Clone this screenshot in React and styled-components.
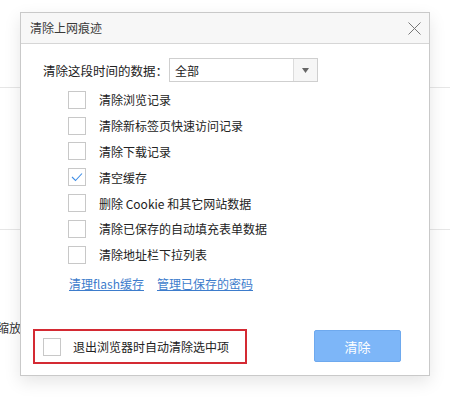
import React from "react";
import styled, { createGlobalStyle } from "styled-components";

const Global = createGlobalStyle`
  html, body { margin: 0; padding: 0; background: #fff; }
  body {
    font-family: "Microsoft YaHei", "Noto Sans CJK SC", "Noto Sans", sans-serif;
    color: #333;
    font-size: 12px;
  }
  #root { width: 450px; height: 404px; overflow: hidden; }
`;

const Page = styled.div`
  position: relative;
  width: 450px;
  height: 404px;
  overflow: hidden;
  background: #fff;
`;

const BgRule = styled.div`
  height: ${(p) => p.$h}px;
  border-bottom: 1px solid #e6e6e6;
`;

const BgText = styled.div`
  margin-top: 90px;
  margin-left: -3px;
  font-size: 12px;
  line-height: 16px;
  color: #333;
`;

const Dialog = styled.div`
  position: absolute;
  left: 20px;
  top: 12px;
  width: 408px;
  height: 362px;
  background: #fff;
  border: 1px solid #c9c9c9;
  box-shadow: 0 6px 16px rgba(0, 0, 0, 0.1);
  display: flex;
  flex-direction: column;
`;

const TitleBar = styled.div`
  height: 30px;
  background: #f7f7f7;
  border-bottom: 1px solid #d6d6d6;
  display: flex;
  align-items: center;
  justify-content: space-between;
  padding: 0 8px 0 9px;
`;

const Title = styled.span`
  font-size: 12px;
  color: #3a3a3a;
  line-height: 16px;
`;

const CloseBtn = styled.button`
  width: 14px;
  height: 14px;
  padding: 0;
  border: 0;
  background: none;
  display: flex;
  align-items: center;
  justify-content: center;
  cursor: pointer;
`;

const Body = styled.div`
  padding: 14px 0 0 22px;
  display: flex;
  flex-direction: column;
`;

const RangeRow = styled.div`
  display: flex;
  align-items: center;
  height: 24px;
`;

const RangeLabel = styled.span`
  font-size: 12.5px;
  color: #222;
  width: 126px;
`;

const Select = styled.div`
  width: 147px;
  height: 22px;
  border: 1px solid #cfcfcf;
  display: flex;
  align-items: center;
  background: #fff;
`;

const SelectValue = styled.span`
  flex: 1;
  padding-left: 5px;
  font-size: 12px;
  color: #222;
`;

const SelectArrow = styled.span`
  width: 23px;
  height: 22px;
  border-left: 1px solid #dcdcdc;
  background: #f6f6f6;
  display: flex;
  align-items: center;
  justify-content: center;
`;

const Options = styled.div`
  margin-top: 5px;
  padding-left: 25px;
  display: flex;
  flex-direction: column;
`;

const OptionRow = styled.label`
  display: flex;
  align-items: center;
  height: 25.8px;
  gap: 13px;
  font-size: 12px;
  color: #222;
`;

const Box = styled.span`
  width: 16px;
  height: 16px;
  border: 1px solid #c8c8c8;
  background: #fff;
  display: flex;
  align-items: center;
  justify-content: center;
  flex: none;
`;

const Links = styled.div`
  margin-top: 7px;
  padding-left: 26px;
  display: flex;
  gap: 13px;
  height: 18px;
  align-items: center;
`;

const Link = styled.a`
  color: #3d7ccc;
  text-decoration: underline;
  font-size: 12px;
  cursor: pointer;
`;

const Footer = styled.div`
  margin-top: auto;
  padding: 0 28px 11px 12px;
  display: flex;
  align-items: center;
  justify-content: space-between;
`;

const AutoClear = styled.label`
  width: 202px;
  height: 31px;
  border: 2px solid #d42a33;
  display: flex;
  align-items: center;
  gap: 12px;
  padding-left: 8px;
  box-sizing: content-box;
  font-size: 12px;
  color: #222;
`;

const ClearButton = styled.button`
  width: 87px;
  height: 32px;
  background: #7db6f8;
  border: 1px solid #6ea9ee;
  border-radius: 2px;
  color: #fff;
  font-family: inherit;
  font-size: 13px;
  margin-bottom: 1px;
`;

const Check = () => (
  <svg width="12" height="10" viewBox="0 0 12 10">
    <path d="M1 5 L4.5 8.5 L11 1.5" fill="none" stroke="#3f8ee6" strokeWidth="1.1" />
  </svg>
);

const options = [
  { label: "清除浏览记录", checked: false },
  { label: "清除新标签页快速访问记录", checked: false },
  { label: "清除下载记录", checked: false },
  { label: "清空缓存", checked: true },
  { label: "删除 Cookie 和其它网站数据", checked: false },
  { label: "清除已保存的自动填充表单数据", checked: false },
  { label: "清除地址栏下拉列表", checked: false },
];

export default function App() {
  return (
    <>
      <Global />
      <Page>
        <BgRule $h={87} />
        <BgRule $h={141} />
        <BgText>缩放</BgText>
        <Dialog>
          <TitleBar>
            <Title>清除上网痕迹</Title>
            <CloseBtn aria-label="关闭">
              <svg width="13" height="13" viewBox="0 0 13 13">
                <path d="M0.5 0.5 L12.5 12.5 M12.5 0.5 L0.5 12.5" stroke="#777" strokeWidth="1" />
              </svg>
            </CloseBtn>
          </TitleBar>
          <Body>
            <RangeRow>
              <RangeLabel>清除这段时间的数据：</RangeLabel>
              <Select>
                <SelectValue>全部</SelectValue>
                <SelectArrow>
                  <svg width="7" height="5" viewBox="0 0 7 5">
                    <path d="M0 0 L7 0 L3.5 5 Z" fill="#666" />
                  </svg>
                </SelectArrow>
              </Select>
            </RangeRow>
            <Options>
              {options.map((o) => (
                <OptionRow key={o.label}>
                  <Box>{o.checked && <Check />}</Box>
                  {o.label}
                </OptionRow>
              ))}
            </Options>
            <Links>
              <Link>清理flash缓存</Link>
              <Link>管理已保存的密码</Link>
            </Links>
          </Body>
          <Footer>
            <AutoClear>
              <Box />
              退出浏览器时自动清除选中项
            </AutoClear>
            <ClearButton>清除</ClearButton>
          </Footer>
        </Dialog>
      </Page>
    </>
  );
}
